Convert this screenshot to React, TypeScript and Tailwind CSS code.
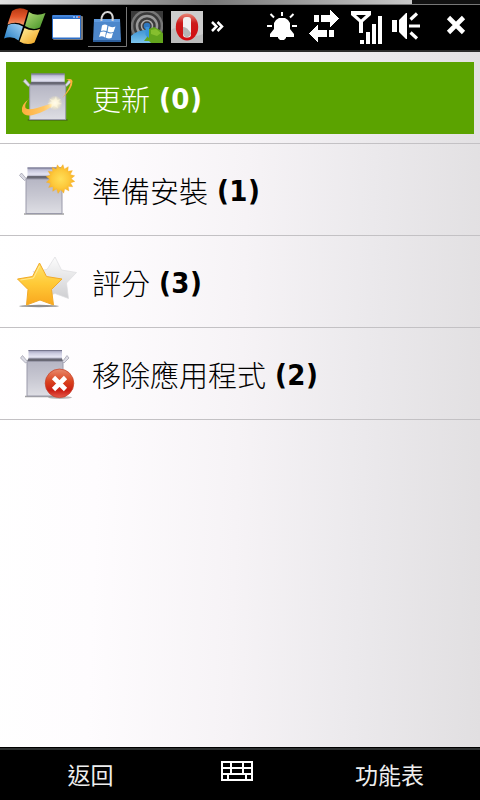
import type { ReactNode } from "react";

const WindowsFlag = () => (
  <svg width="46" height="45" viewBox="0 5 46 45">
    <defs>
      <linearGradient id="flagRed" x1="0" y1="0" x2="0" y2="1">
        <stop offset="0" stopColor="#b83a12" />
        <stop offset=".5" stopColor="#e2562a" />
        <stop offset="1" stopColor="#f49a6c" />
      </linearGradient>
      <linearGradient id="flagGreen" x1="0" y1="0" x2="1" y2="1">
        <stop offset="0" stopColor="#b5dc78" />
        <stop offset="1" stopColor="#3f8f22" />
      </linearGradient>
      <linearGradient id="flagBlue" x1="1" y1="0" x2="0" y2="1">
        <stop offset="0" stopColor="#a6d4f4" />
        <stop offset="1" stopColor="#1f7ac4" />
      </linearGradient>
      <linearGradient id="flagYellow" x1="0" y1="0" x2="1" y2="1">
        <stop offset="0" stopColor="#fff0a0" />
        <stop offset="1" stopColor="#f0a018" />
      </linearGradient>
    </defs>
    <path d="M12 11Q19 6 28 10.500L23.500 25Q16 21 7.500 24.500Z" fill="url(#flagRed)" />
    <path d="M29 12Q36 17 45.500 13L40 27.500Q33 31 25 26Z" fill="url(#flagGreen)" />
    <path d="M8 25Q16 22 23 26.500L18.500 40.500Q12 35 4 38.500Z" fill="url(#flagBlue)" />
    <path d="M24.500 28Q32 32 40 29L34.500 42.500Q27 46 19.500 41.500Z" fill="url(#flagYellow)" />
  </svg>
);

const AppWindow = () => (
  <svg width="42" height="45" viewBox="46 5 42 45">
    <rect x="53" y="16" width="30" height="24" rx="1" fill="#777" />
    <rect x="52" y="15" width="29" height="24" rx="1" fill="#2c6ec8" />
    <rect x="53" y="19" width="27" height="18.500" fill="#fff" />
    <path d="M53 16h20" stroke="#5c9ae8" />
    <path d="M73 17h2M76 17h2" stroke="#9cc6ff" strokeWidth="1.500" />
    <path d="M78 17h2" stroke="#ff6a3c" strokeWidth="1.500" />
  </svg>
);

const StoreBag = () => (
  <svg width="40" height="45" viewBox="88 5 40 45">
    <path d="M88 46.500h38.500V7" fill="none" stroke="#777" />
    <path d="M94 19h26l1 22H93Z" fill="#4d87cb" />
    <path d="M94 19h26v3H94Z" fill="#5f9ade" />
    <path d="M93 41h28" stroke="#2e5f9c" strokeWidth="2" />
    <path d="M101.500 21C100 10 115 8 112.500 21" fill="none" stroke="#d6d6d6" strokeWidth="2" />
    <path
      d="M102 25.500q3-2 5.500 0l-1 5.500q-3-1-5.500 0ZM108.500 26q3 2 7 .5l-2 5.500q-3 1-6-.5ZM100.500 32q3-1 5.500 0l-1 5.500q-3-2-6-.5ZM107 32.500q3 1.500 6 .5l-1.500 5q-3 1-6-.5Z"
      fill="#fff"
    />
  </svg>
);

const GlobeSignal = () => (
  <svg width="40" height="45" viewBox="128 5 40 45">
    <defs>
      <clipPath id="globeTile">
        <rect x="131" y="11" width="32" height="32" />
      </clipPath>
      <linearGradient id="globeSea" x1="0" y1="0" x2="0" y2="1">
        <stop offset="0" stopColor="#3f94d4" />
        <stop offset=".5" stopColor="#8fd4f4" />
      </linearGradient>
    </defs>
    <g clipPath="url(#globeTile)">
      <rect x="131" y="11" width="32" height="32" fill="#3a3a3a" />
      <g fill="none">
        <circle cx="147" cy="26" r="15" stroke="#777" strokeWidth="2.500" />
        <circle cx="147" cy="26" r="10" stroke="#999" strokeWidth="2.500" />
        <circle cx="147" cy="26" r="5.500" stroke="#aaa" strokeWidth="1.500" />
      </g>
      <ellipse cx="147" cy="47" rx="21" ry="17" fill="url(#globeSea)" />
      <path d="M146 33l3-4 5-2 6 3 5 6v8h-13l-3-3-5 0 3-4Z" fill="#63a51d" />
      <path d="M151 30l5-1 5 4-4 3-6-2Z" fill="#86bf2e" />
      <circle cx="147" cy="26" r="3.300" fill="#2e76bd" />
      <path d="M145.500 27h3.500v11l-3.500-3Z" fill="#3a94dc" />
    </g>
  </svg>
);

const OperaLogo = () => (
  <svg width="38" height="45" viewBox="168 5 38 45">
    <defs>
      <linearGradient id="operaRed" x1="0" y1="0" x2="0" y2="1">
        <stop offset="0" stopColor="#e88878" />
        <stop offset=".35" stopColor="#cc1c1c" />
        <stop offset="1" stopColor="#d40c10" />
      </linearGradient>
    </defs>
    <rect x="171" y="11" width="32" height="32" fill="#cdcdcd" />
    <path d="M171 30q6-5 14 2t18 2v9h-32Z" fill="#bcbcbc" />
    <ellipse cx="187" cy="27" rx="11.200" ry="13.500" fill="url(#operaRed)" />
    <rect x="183" y="17" width="8" height="20.500" rx="3" fill="#f1f1f1" />
    <path d="M183 27q3-1 8 6v1q-1 3-4 3.500-3-.5-4-4Z" fill="#b5b5b5" />
  </svg>
);

const MoreChevrons = () => (
  <svg width="56" height="45" viewBox="206 5 56 45">
    <path
      d="M212 22l4.500 4.500-4.500 4.500M217.500 22l4.500 4.500-4.500 4.500"
      fill="none"
      stroke="#fff"
      strokeWidth="2.500"
    />
  </svg>
);

const Bell = () => (
  <svg width="44" height="45" viewBox="262 5 44 45" fill="#fff">
    <path d="M279 18h6l3 2 2 3v6l4 5v3h-8v1l-2 2h-4l-2-2v-1h-8v-3l4-5v-6l2-3Z" />
    <path
      d="M282 12v4M270.500 14l3.500 3.500M293.500 14l-3.500 3.500M267 26h5M292 26h5"
      stroke="#fff"
      strokeWidth="2"
    />
  </svg>
);

const SyncArrows = () => (
  <svg width="38" height="45" viewBox="306 5 38 45" fill="#fff" shapeRendering="crispEdges">
    <path d="M314 15h5v7h-5ZM321 15h9V9.500l9 9-9 9V22h-9Z" />
    <path d="M309 33.500l9-9V30h9v7h-9v5.500ZM329 30h5v7h-5Z" />
  </svg>
);

const SignalBars = () => (
  <svg width="44" height="45" viewBox="344 5 44 45" fill="#fff">
    <path d="M351 11h20v4l-8 7v11h-4V22l-8-7Zm5 4l5 4.500 5-4.500Z" fillRule="evenodd" />
    <path d="M360 40h4v4h-4ZM366 32h4v12h-4ZM372 24h4v20h-4ZM378 16h4v28h-4Z" />
  </svg>
);

const Speaker = () => (
  <svg width="40" height="45" viewBox="388 5 40 45" fill="#fff">
    <path d="M392 20h5v12h-5ZM399 20l7-7h1v26h-1l-7-7Z" />
    <path d="M410.500 19.500l6.500-6M409 26h11M410.500 32.500l6.500 6" stroke="#fff" strokeWidth="3.200" />
  </svg>
);

const Close = () => (
  <svg width="52" height="45" viewBox="428 5 52 45">
    <path d="M448.500 17.500l15 15M463.500 17.500l-15 15" stroke="#fff" strokeWidth="4.600" />
  </svg>
);

const Keyboard = () => (
  <svg width="32" height="20" viewBox="0 0 32 20" shapeRendering="crispEdges">
    <path d="M0 0h32v20H0Z" fill="#fff" />
    <path
      d="M2 2h7v4H2ZM11 2h10v4H11ZM23 2h7v4h-7ZM2 8h7v4H2ZM11 8h10v4H11ZM23 8h7v4h-7ZM2 14h4v4H2ZM8 14h16v4H8ZM26 14h4v4h-4Z"
      fill="#000"
    />
  </svg>
);

// Shared box drawing, each row lays its own badge over it
const Box = () => (
  <g>
    <defs>
      <linearGradient id="boxFront" x1="0" y1="0" x2="0" y2="1">
        <stop offset="0" stopColor="#b6b6c4" />
        <stop offset=".5" stopColor="#c8c8d2" />
        <stop offset="1" stopColor="#dedee4" />
      </linearGradient>
      <linearGradient id="boxLid" x1="0" y1="0" x2="0" y2="1">
        <stop offset="0" stopColor="#9494b0" />
        <stop offset=".35" stopColor="#c9c9de" />
        <stop offset=".75" stopColor="#e4e4f2" />
        <stop offset="1" stopColor="#a8a8bc" />
      </linearGradient>
    </defs>
    <path d="M25 64.500h40" stroke="#333" strokeOpacity=".45" strokeWidth="1.500" />
    <path d="M28.500 18h33.500v9H28.500Z" fill="url(#boxLid)" />
    <path d="M28.500 18.500h33.500" stroke="#77778f" />
    <path d="M26.500 30l2-3.500h33.500l1.500 3.500Z" fill="#686874" />
    <path d="M27 29.500h36v34.500h-36Z" fill="url(#boxFront)" stroke="#9a9aaa" />
    <path d="M27.500 29.500l-5-6-2 2.500 5 5ZM62.500 29.500l4.500-6 2 2.500-5 5Z" fill="#dcdce4" stroke="#9c9cac" strokeWidth=".7" />
  </g>
);

const UpdateIcon = () => (
  <svg width="93" height="72" viewBox="0 10 93 72" className="shrink-0">
    <defs>
      <radialGradient id="spark">
        <stop offset="0" stopColor="#fff" />
        <stop offset=".4" stopColor="#fff8d8" stopOpacity=".85" />
        <stop offset="1" stopColor="#fff0b0" stopOpacity="0" />
      </radialGradient>
      <linearGradient id="comet">
        <stop offset="0" stopColor="#fdae3c" />
        <stop offset=".6" stopColor="#ffc766" />
        <stop offset="1" stopColor="#fff0c4" />
      </linearGradient>
    </defs>
    <g transform="translate(2.700 3.500)">
      <Box />
    </g>
    <path d="M66 27.500q6-1.500 6.500 1.500.5 7-10.500 17.500Q70 36 70.500 31q0-3-4.500-3.500Z" fill="#ffb03a" />
    <path d="M29 47Q20.500 53 22 59.500q2.500 5.500 11 3.500Q46 60 58 50q-9 2-21 6-9 2.500-11.500 0-1.500-3.500 3.500-9.500Z" fill="url(#comet)" />
    <circle cx="55" cy="51" r="7.500" fill="url(#spark)" />
    <path
      d="M56 44l1 4 4-1-3 3 4 2-5 .5 1 4-4-3-3 3 1-4.500-5-.5 5-2-3-3 5 2Z"
      fill="#fff8e0"
      fillOpacity=".6"
    />
  </svg>
);

const BURST_SPIKES = 16;

const burstPoints = Array.from({ length: BURST_SPIKES * 2 }, (_, i) => {
  const angle = (i * Math.PI) / BURST_SPIKES - 1.4;
  const radius = i % 2 === 0 ? 14.6 : 10.8;
  return `${(60.5 + Math.cos(angle) * radius).toFixed(2)},${(35 + Math.sin(angle) * radius).toFixed(2)}`;
}).join(" ");

const InstallIcon = () => (
  <svg width="93" height="91" viewBox="0 0 93 91" className="shrink-0">
    <defs>
      <radialGradient id="burst">
        <stop offset="0" stopColor="#ffdf58" />
        <stop offset=".6" stopColor="#fdc93c" />
        <stop offset="1" stopColor="#f8b024" />
      </radialGradient>
    </defs>
    <g transform="translate(-1 5.500)">
      <Box />
    </g>
    <polygon points={burstPoints} fill="url(#burst)" stroke="#f2aa28" strokeWidth=".3" />
  </svg>
);

const RatingIcon = () => (
  <svg width="93" height="91" viewBox="0 0 93 91" className="shrink-0">
    <defs>
      <linearGradient id="goldStar" x1="0" y1="0" x2="0" y2="1">
        <stop offset="0" stopColor="#ffe26a" />
        <stop offset=".5" stopColor="#ffc936" />
        <stop offset="1" stopColor="#f9a71e" />
      </linearGradient>
      <linearGradient id="greyStar" x1="0" y1="0" x2="0" y2="1">
        <stop offset="0" stopColor="#fcfcfc" />
        <stop offset="1" stopColor="#cfcfd2" />
      </linearGradient>
    </defs>
    <path
      d="M55 21l6.500 13 15 2.500-10 10.500 2 15.500-13.500-5-14 5 2-16-10-11 14-2Z"
      fill="url(#greyStar)"
      stroke="#dcdcdf"
      strokeWidth=".7"
    />
    <ellipse cx="39" cy="70" rx="20" ry="1.200" fill="#555" fillOpacity=".65" />
    <path
      d="M39.500 27L46.500 40.500l15.500 2.500-10.500 10.500 2 15.500-13.500-5-13.500 5 1.500-15.500L17.500 43l15-2.500Z"
      fill="url(#goldStar)"
      stroke="#f2aa28"
    />
    <path d="M39.500 30L33.500 42l-13 2" fill="none" stroke="#fff2b0" strokeOpacity=".7" />
  </svg>
);

const RemoveIcon = () => (
  <svg width="93" height="91" viewBox="0 0 93 91" className="shrink-0">
    <defs>
      <linearGradient id="redBall" x1="0" y1="0" x2="0" y2="1">
        <stop offset="0" stopColor="#e88a6c" />
        <stop offset=".45" stopColor="#d9411d" />
        <stop offset=".75" stopColor="#cb2015" />
        <stop offset="1" stopColor="#e65a4c" />
      </linearGradient>
    </defs>
    <g transform="translate(0 4)">
      <Box />
    </g>
    <ellipse cx="60" cy="69.500" rx="12" ry="1.500" fill="#777" fillOpacity=".5" />
    <circle cx="59.500" cy="55.300" r="14.300" fill="url(#redBall)" stroke="#c54028" strokeWidth=".7" />
    <path d="M53.500 49.500l12 12M65.500 49.500l-12 12" stroke="#fff" strokeWidth="4.600" />
  </svg>
);

type RowProps = {
  icon: ReactNode;
  label: string;
  count: number;
  selected?: boolean;
};

const Row = ({ icon, label, count, selected }: RowProps) => {
  return (
    <div className={`h-[92px] border-b border-[#c3c1c4] ${selected ? "px-[6px] pt-[10px]" : ""}`}>
      <div
        className={
          selected
            ? "flex h-[72px] items-center bg-[#5ba300] text-white"
            : "flex h-[91px] items-center pt-px text-black"
        }
      >
        <div className={selected ? "-ml-[6px]" : "-mt-px"}>{icon}</div>
        <p className="-ml-px flex items-center whitespace-pre text-[29px] leading-[40px]">
          <span className="font-['Noto_Sans_CJK_TC',sans-serif] font-light">{label}</span>
          <span className="ml-[9px] pt-[2px] font-['DejaVu_Sans_Condensed','DejaVu_Sans',sans-serif] font-bold tracking-[0.4px]">
            ({count})
          </span>
        </p>
      </div>
    </div>
  );
};

const App = () => {
  return (
    <div className="flex h-[800px] w-[480px] flex-col overflow-hidden bg-black">
      <header className="h-[52px] border-b-2 border-[#2b2b2b] bg-black">
        <div className="h-[5px] border-b border-[#777] bg-[#111]">
          <div className="h-[4px] w-[412px] bg-linear-to-r from-[#e2e2e2] via-[#777] to-[#c8c8c8]" />
        </div>
        <div className="flex h-[45px]">
          <WindowsFlag />
          <AppWindow />
          <StoreBag />
          <GlobeSignal />
          <OperaLogo />
          <MoreChevrons />
          <Bell />
          <SyncArrows />
          <SignalBars />
          <Speaker />
          <Close />
        </div>
      </header>

      <main className="h-[695px] bg-[linear-gradient(92deg,#fff_0%,#fefcfe_22%,#f6f3f6_50%,#ebe9ec_75%,#e1dfe1_100%)]">
        <Row icon={<UpdateIcon />} label="更新" count={0} selected />
        <Row icon={<InstallIcon />} label="準備安裝" count={1} />
        <Row icon={<RatingIcon />} label="評分" count={3} />
        <Row icon={<RemoveIcon />} label="移除應用程式" count={2} />
      </main>

      <footer className="h-[53px] bg-black pt-px">
        <div className="h-[2px] bg-[#2b2e2e]" />
        <div className="grid h-[50px] grid-cols-[181px_118px_181px] items-center justify-items-center font-['Noto_Sans_CJK_TC',sans-serif] text-[23px] leading-[48px] text-[#eee]">
          <span className="-mt-[2px]">返回</span>
          <div className="-mt-[8px] -ml-[7px]">
            <Keyboard />
          </div>
          <span className="-mt-[2px]">功能表</span>
        </div>
      </footer>
    </div>
  );
};

export default App;
